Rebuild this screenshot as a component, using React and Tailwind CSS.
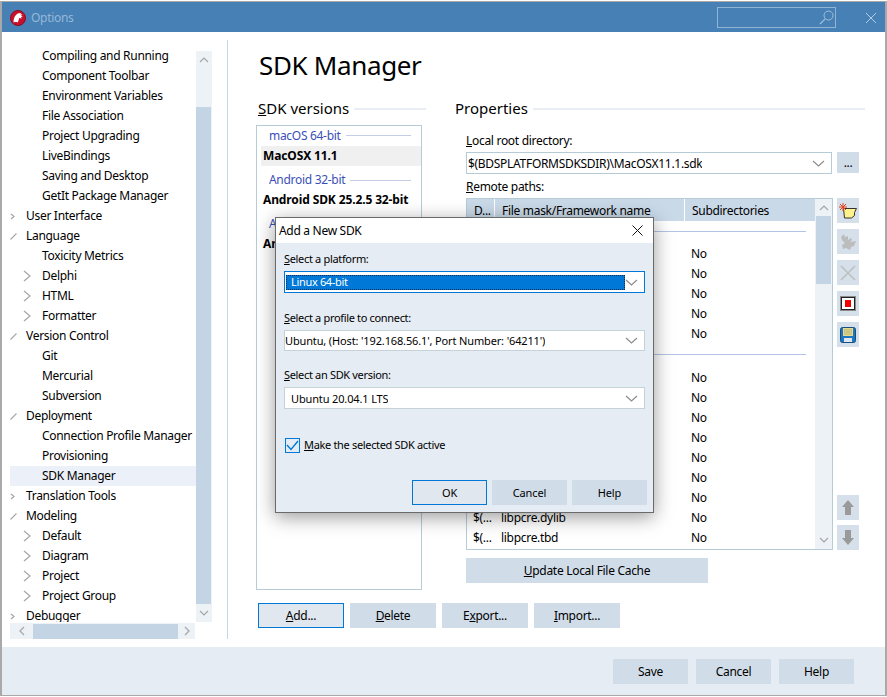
import React from "react";

const tree = [
  [1, "", "Compiling and Running"],
  [1, "", "Component Toolbar"],
  [1, "", "Environment Variables"],
  [1, "", "File Association"],
  [1, "", "Project Upgrading"],
  [1, "", "LiveBindings"],
  [1, "", "Saving and Desktop"],
  [1, "", "GetIt Package Manager"],
  [0, "c", "User Interface"],
  [0, "o", "Language"],
  [1, "", "Toxicity Metrics"],
  [1, "c", "Delphi"],
  [1, "c", "HTML"],
  [1, "c", "Formatter"],
  [0, "o", "Version Control"],
  [1, "", "Git"],
  [1, "", "Mercurial"],
  [1, "", "Subversion"],
  [0, "o", "Deployment"],
  [1, "", "Connection Profile Manager"],
  [1, "", "Provisioning"],
  [1, "", "SDK Manager", true],
  [0, "c", "Translation Tools"],
  [0, "o", "Modeling"],
  [1, "c", "Default"],
  [1, "c", "Diagram"],
  [1, "c", "Project"],
  [1, "c", "Project Group"],
  [0, "c", "Debugger"],
];

function Chev({ dir = "right", w = 8, h = 12, color = "#a6a6a6", className = "" }) {
  const pts = {
    right: `1,1 ${w - 1},${h / 2} 1,${h - 1}`,
    left: `${w - 1},1 1,${h / 2} ${w - 1},${h - 1}`,
    up: `1,${h - 1} ${w / 2},1 ${w - 1},${h - 1}`,
    down: `1,1 ${w / 2},${h - 1} ${w - 1},1`,
  }[dir];
  return (
    <svg width={w} height={h} className={className}>
      <polyline points={pts} fill="none" stroke={color} strokeWidth="1.2" />
    </svg>
  );
}

function TreeIcon({ level, kind }) {
  if (level === 0 && kind === "c") return <Chev w={5} h={7} />;
  if (level === 0 && kind === "o")
    return (
      <svg width="7" height="7">
        <line x1="0.5" y1="6.5" x2="6.5" y2="0.5" stroke="#a6a6a6" strokeWidth="1.1" />
      </svg>
    );
  if (kind === "c") return <Chev w={8} h={12} />;
  return null;
}

function TreeRow({ level, kind, label, active }) {
  return (
    <div className={`flex items-center h-5 shrink-0 whitespace-nowrap ${active ? "bg-[#ecf1f9]" : ""}`}>
      <div className={`flex items-center shrink-0 ${level === 0 ? "w-4" : "w-8 pl-[13px]"}`}>
        <TreeIcon level={level} kind={kind} />
      </div>
      <span>{label}</span>
    </div>
  );
}

function Btn({ w, focused, children, className = "" }) {
  return (
    <button
      className={`flex items-center justify-center h-[25px] shrink-0 text-black ${w} ${
        focused ? "border border-[#0078d7] bg-[#e0e7ef]" : "bg-[#d0dde9]"
      } ${className}`}
    >
      {children}
    </button>
  );
}

function Combo({ h = "h-[22px]", border = "border-[#b5ccd6]", pl = "pl-[6px]", tracking = "", children }) {
  return (
    <div className={`flex items-center justify-between bg-white border ${border} ${h} ${pl} pr-[6px] w-full whitespace-nowrap ${tracking}`}>
      <span className="truncate pt-px">{children}</span>
      <Chev dir="down" w={13} h={7} color="#8d8d8d" className="shrink-0" />
    </div>
  );
}

function GroupRow({ first, label }) {
  return (
    <div className={`flex items-center pl-[12px] text-[#3a4fb8] whitespace-nowrap ${first ? "h-5 pb-[1px]" : "h-6 pt-1"}`}>
      <span>{label}</span>
      <div className="flex-1 h-px bg-[#c3cde6] ml-[5px] mr-[10px]" />
    </div>
  );
}

function SdkItem({ label, active }) {
  return (
    <div className={`flex items-center h-5 ml-1 pl-[2px] font-bold tracking-[-0.12px] whitespace-nowrap ${active ? "bg-[#f0f0f0]" : ""}`}>
      {label}
    </div>
  );
}

function PathRow({ d, name }) {
  return (
    <div className="flex items-center h-5 whitespace-nowrap">
      <span className="w-[34px] pl-[6px] shrink-0">{d}</span>
      <span className="w-[190px] shrink-0">{name}</span>
      <span>No</span>
    </div>
  );
}

function PathGroup({ h }) {
  return (
    <div className={`flex items-start pl-[14px] pr-[9px] pt-[10px] ${h}`}>
      <div className="flex-1 h-px bg-[#b4c4e6]" />
    </div>
  );
}

function ToolBtn({ children }) {
  return <div className="flex items-center justify-center w-[22px] h-[25px] bg-[#d5e0ea]">{children}</div>;
}

function Heading({ children }) {
  return (
    <div className="flex items-center h-5 text-[15px] tracking-[0px] whitespace-nowrap">
      <span>{children}</span>
      <div className="flex-1 h-[2px] ml-[5px] mt-[2px] bg-[#e8eef4]" />
    </div>
  );
}

export default function App() {
  return (
    <div className="relative w-[887px] h-[697px] bg-white font-['Noto_Sans',sans-serif] text-[12px] leading-4 text-black overflow-hidden tracking-[-0.3px]">
      <div className="flex flex-col h-[695px] mt-px border-x-2 border-y border-x-[#a9a9a9] border-y-[#a9a9a9]">
        {/* title bar */}
        <div className="flex items-center h-[30px] pt-px shrink-0 bg-[#4680b5]">
          <svg width="16" height="16" viewBox="0 0 16 16" className="ml-2">
            <circle cx="8" cy="8" r="7.5" fill="#c8102e" stroke="#8d0b20" strokeWidth="1" />
            <path d="M3.500 12.500c0-3 .5-5.500 2.500-7.500 1.200-1.200 3-2.200 5-1.800l-.8 1 2.300.3-1.500 1.100 1.800.9-2 .4 1 1.500-2.500-.3c-.5 1.500-1 3-1.500 4.400-1-.5-2.500-.6-4.300 0z" fill="#fff" />
          </svg>
          <span className="ml-[5px] text-[#94b8d8]">Options</span>
          <div className="ml-auto flex items-center justify-end w-[119px] h-[21px] border border-[#8fb4d4] pr-[1px]">
            <svg width="15" height="15" viewBox="0 0 15 15">
              <circle cx="9.500" cy="5.500" r="4.500" fill="none" stroke="#a0c0dc" strokeWidth="1" />
              <line x1="6.200" y1="8.800" x2="1" y2="14" stroke="#a0c0dc" strokeWidth="1.200" />
            </svg>
          </div>
          <svg width="10" height="10" className="ml-[30px] mr-[9px]">
            <path d="M0 0L10 10M10 0L0 10" stroke="#b4cee4" strokeWidth="1" />
          </svg>
        </div>

        {/* body */}
        <div className="flex flex-1 min-h-0">
          {/* left tree */}
          <div className="w-[225px] shrink-0 pl-2 pt-[14px]">
            <div className="flex">
              <div className="flex flex-col w-[186px] h-[576px] overflow-hidden">
                {tree.map(([level, kind, label, active]) => (
                  <TreeRow key={label} level={level} kind={kind} label={label} active={active} />
                ))}
              </div>
              <div className="flex flex-col w-4 mt-[5px] h-[571px] bg-[#edf2f6]">
                <div className="flex items-center justify-center h-[18px] shrink-0">
                  <Chev dir="up" w={10} h={6} />
                </div>
                <div className="h-[38px] shrink-0" />
                <div className="w-[15px] flex-1 bg-[#c3d5e5]" />
                <div className="flex items-center justify-center h-[18px] shrink-0">
                  <Chev dir="down" w={10} h={6} />
                </div>
              </div>
            </div>
            <div className="flex items-center w-[185px] h-4 mt-px bg-[#edf2f6]">
              <div className="flex justify-center w-[23px]">
                <Chev dir="left" w={6} h={10} />
              </div>
              <div className="w-[145px] h-[15px] bg-[#c3d5e5]" />
              <div className="flex justify-center w-[17px]">
                <Chev dir="right" w={6} h={10} />
              </div>
            </div>
          </div>

          <div className="w-px h-[599px] mt-2 shrink-0 bg-[#c7d6e3]" />

          {/* right */}
          <div className="flex-1 pl-7 pt-[15px]">
            <div className="ml-[3px] h-9 leading-9 text-[26px] tracking-[-0.35px] whitespace-nowrap">SDK Manager</div>
            <div className="flex h-[492px] mt-[15px]">
              <div className="flex flex-col w-[170px] shrink-0">
                <div className="ml-[2px]">
                  <Heading><u>S</u>DK versions</Heading>
                </div>
                <div className="w-[166px] h-[465px] mt-[7px] border border-[#b5ccd6] overflow-hidden">
                  <GroupRow first label="macOS 64-bit" />
                  <SdkItem active label="MacOSX 11.1" />
                  <GroupRow label="Android 32-bit" />
                  <SdkItem label="Android SDK 25.2.5 32-bit" />
                  <GroupRow label="Android 64-bit" />
                  <SdkItem label="Android SDK 25.2.5 64-bit" />
                </div>
              </div>

              <div className="flex-1 ml-[29px] mr-[20px] min-w-0">
                <Heading>Properties</Heading>
                <div className="pl-[11px]">
                  <div className="mt-[15px]"><u>L</u>ocal root directory:</div>
                  <div className="flex gap-[5px] mt-[3px] w-[393px]">
                    <Combo pl="pl-[1px]">$(BDSPLATFORMSDKSDIR)\MacOSX11.1.sdk</Combo>
                    <div className="flex items-center justify-center w-[22px] h-[21px] shrink-0 bg-[#d0dde9]">...</div>
                  </div>
                  <div className="mt-[5px]"><u>R</u>emote paths:</div>
                  <div className="flex gap-1 mt-[3px] w-[393px] h-[352px]">
                    <div className="flex w-[367px] shrink-0 border border-[#b5ccd6]">
                      <div className="flex-1 min-w-0">
                        <div className="flex gap-px h-[22px] items-center whitespace-nowrap">
                          <div className="flex items-center h-full w-[27px] pl-[7px] pt-[2px] bg-[#c9d9e8]">D...</div>
                          <div className="flex items-center h-full w-[189px] pl-[7px] pt-[2px] bg-[#c9d9e8]">File mask/Framework name</div>
                          <div className="flex items-center h-full flex-1 pl-[7px] pt-[2px] bg-[#c9d9e8]">Subdirectories</div>
                        </div>
                        <PathGroup h="h-[23px]" />
                        <PathRow />
                        <PathRow />
                        <PathRow />
                        <PathRow />
                        <PathRow />
                        <PathGroup h="h-6" />
                        <PathRow />
                        <PathRow />
                        <PathRow />
                        <PathRow />
                        <PathRow />
                        <PathRow />
                        <PathRow />
                        <PathRow d="$(..." name="libpcre.dylib" />
                        <PathRow d="$(..." name="libpcre.tbd" />
                      </div>
                      <div className="flex flex-col w-[17px] shrink-0 bg-[#edf2f6]">
                        <div className="flex items-center justify-center h-[17px]">
                          <Chev dir="up" w={10} h={6} />
                        </div>
                        <div className="w-[15px] ml-px h-[68px] bg-[#c3d5e5]" />
                        <div className="flex items-center justify-center h-[18px] mt-auto">
                          <Chev dir="down" w={10} h={6} />
                        </div>
                      </div>
                    </div>
                    <div className="flex flex-col gap-[6px] flex-1">
                      <ToolBtn>
                        <svg width="18" height="16" viewBox="0 0 18 16">
                          <path d="M4.500 5.500h13l-2 4v3l-3 2.500H5.500z" fill="#fdf28c" stroke="#333" strokeWidth="1" />
                          <path d="M4 0v8M0 4h8M1 1l6 6M7 1L1 7" stroke="#e8401a" strokeWidth="1" />
                        </svg>
                      </ToolBtn>
                      <ToolBtn>
                        <svg width="17" height="18" viewBox="0 0 17 18">
                          <path d="M1 4l3-3 1 3 3-1v4l3-2 1 2-2 2 6-1-2 5-3 1-1 3-4-2-3 1-1-4 3-2-3-3z" fill="#bcbcbc" />
                        </svg>
                      </ToolBtn>
                      <ToolBtn>
                        <svg width="16" height="16">
                          <path d="M1 1L15 15M15 1L1 15" stroke="#bfbfbf" strokeWidth="1.600" />
                        </svg>
                      </ToolBtn>
                      <ToolBtn>
                        <svg width="16" height="15" viewBox="0 0 16 15">
                          <rect x="0.500" y="0.500" width="15" height="14" fill="#fff" stroke="#8a8a8a" />
                          <rect x="1.500" y="1.500" width="13" height="12" fill="none" stroke="#222" />
                          <rect x="5" y="4" width="6" height="7" fill="#f00000" />
                        </svg>
                      </ToolBtn>
                      <ToolBtn>
                        <svg width="16" height="16" viewBox="0 0 16 16">
                          <rect x="0.500" y="0.500" width="15" height="15" rx="2" fill="#1e76c0" stroke="#14507f" />
                          <rect x="3" y="1" width="10" height="8" fill="#e6d98a" />
                          <path d="M4 3h8M4 5h8M4 7h8" stroke="#a8a878" strokeWidth="0.800" />
                          <rect x="4" y="11" width="8" height="4" fill="#dfe6ee" />
                        </svg>
                      </ToolBtn>
                      <div className="mt-auto">
                        <ToolBtn>
                          <svg width="12" height="15" viewBox="0 0 12 15">
                            <path d="M6 0l6 7H9v8H3V7H0z" fill="#9a9a9a" />
                          </svg>
                        </ToolBtn>
                      </div>
                      <div className="-mt-px">
                        <ToolBtn>
                          <svg width="12" height="15" viewBox="0 0 12 15">
                            <path d="M3 0h6v8h3l-6 7-6-7h3z" fill="#9a9a9a" />
                          </svg>
                        </ToolBtn>
                      </div>
                    </div>
                  </div>
                  <Btn w="w-[242px]" className="mt-2"><span><u>U</u>pdate Local File Cache</span></Btn>
                </div>
              </div>
            </div>

            <div className="flex gap-[6px] mt-[13px] ml-[2px]">
              <Btn w="w-[86px]" focused><span><u>A</u>dd...</span></Btn>
              <Btn w="w-[86px]"><span><u>D</u>elete</span></Btn>
              <Btn w="w-[86px]"><span>E<u>x</u>port...</span></Btn>
              <Btn w="w-[86px]"><span><u>I</u>mport...</span></Btn>
            </div>
          </div>
        </div>

        {/* footer */}
        <div className="flex justify-end gap-2 h-12 shrink-0 pt-3 pr-[31px] bg-[#e6ecf3]">
          <Btn w="w-[75px]">Save</Btn>
          <Btn w="w-[75px]">Cancel</Btn>
          <Btn w="w-[75px]">Help</Btn>
        </div>
      </div>

      {/* modal dialog */}
      <div className="absolute left-[275px] top-[217px] flex flex-col w-[379px] h-[296px] border border-[#6a6a6a] bg-[#e6ecf3] shadow-[0_4px_18px_rgba(0,0,0,0.4)]">
        <div className="flex items-center justify-between h-[25px] shrink-0 pl-[3px] pr-[10px] bg-white">
          <span>Add a New SDK</span>
          <svg width="11" height="11">
            <path d="M0.500 0.500L10.500 10.500M10.500 0.500L0.500 10.500" stroke="#111" strokeWidth="1" />
          </svg>
        </div>
        <div className="flex-1 pl-2 pt-2 text-[11px] tracking-[-0.33px]">
          <div className="w-[361px]">
            <div><u>S</u>elect a platform:</div>
            <div className="flex items-center justify-between h-[22px] mt-1 bg-white border border-[#0078d7] pl-[1px] pr-[6px]">
              <div className="flex items-center w-[340px] h-[15px] pl-[4px] bg-[#0078d7] text-white border border-dotted border-[#0b2a4a]">Linux 64-bit</div>
              <Chev dir="down" w={13} h={7} color="#8d8d8d" className="shrink-0" />
            </div>
            <div className="mt-[17px]"><u>S</u>elect a profile to connect:</div>
            <div className="mt-1">
              <Combo h="h-[21px]" border="border-[#c6d2da]" pl="pl-0" tracking="tracking-[-0.14px]">Ubuntu, (Host: '192.168.56.1', Port Number: '64211')</Combo>
            </div>
            <div className="mt-4"><u>S</u>elect an SDK version:</div>
            <div className="mt-1">
              <Combo border="border-[#c6d2da]" pl="pl-[6px]" tracking="tracking-[-0.14px]">Ubuntu 20.04.1 LTS</Combo>
            </div>
            <div className="flex items-center gap-[4px] mt-7 h-4">
              <div className="flex items-center justify-center w-[15px] h-[15px] ml-px border border-[#0078d7]">
                <svg width="13" height="11" viewBox="0 0 13 11">
                  <polyline points="1,5 5,9.500 12,1" fill="none" stroke="#0078d7" strokeWidth="1.400" />
                </svg>
              </div>
              <span><u>M</u>ake the selected SDK active</span>
            </div>
          </div>
          <div className="flex justify-end gap-[5px] w-[363px] mt-[27px] tracking-[-0.1px]">
            <Btn w="w-[75px]" focused>OK</Btn>
            <Btn w="w-[75px]">Cancel</Btn>
            <Btn w="w-[75px]">Help</Btn>
          </div>
        </div>
      </div>
    </div>
  );
}
